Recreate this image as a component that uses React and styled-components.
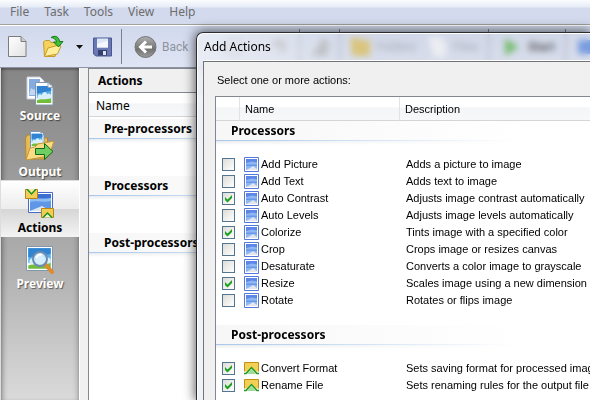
import React, { useState } from "react";
import styled, { createGlobalStyle, css } from "styled-components";

const UI_FONT = `"Noto Sans", "Open Sans", sans-serif`;
const LIST_FONT = `"Liberation Sans", Arial, sans-serif`;

const COLORS = {
  bar: "#d3daed",
  face: "#f0f0f0",
  edge: "#828790",
  groupLine: "#a9c8ea",
};

const GlobalStyle = createGlobalStyle`
  * {
    box-sizing: border-box;
  }
  html, body, #root {
    height: 100%;
    margin: 0;
  }
  body {
    overflow: hidden;
    font: 12px/16px ${UI_FONT};
    color: #000;
  }
  button {
    font: inherit;
    color: inherit;
    background: none;
    border: 0;
    padding: 0;
  }
`;

const Window = styled.div`
  position: relative;
  display: flex;
  flex-direction: column;
  height: 100%;
  overflow: hidden;
  background: ${COLORS.face};
`;

const MenuBar = styled.nav`
  display: flex;
  flex: none;
  gap: 15px;
  height: 25px;
  padding: 0 10px;
  background: linear-gradient(#fbfcfe, #e6ecf6 7px, ${COLORS.bar} 8px);
  border-bottom: 1px solid #a0a0a0;
  color: #6d6d6d;
`;

const ToolBar = styled.div`
  display: flex;
  flex: none;
  align-items: center;
  height: 43px;
  padding: 0 8px;
  border-top: 1px solid #fff;
  border-bottom: 1px solid #8f94a3;
  background: linear-gradient(#d0d8ec, #dfe5f4);
  overflow: hidden;
`;

const ToolButton = styled.button`
  display: flex;
  flex: none;
  align-items: center;
  gap: 5px;
  height: 32px;
  margin-right: ${(props) => props.$after || 0}px;
  color: ${(props) => (props.$strong ? "#111" : "#8e929d")};
  font: ${(props) => (props.$strong ? 700 : 400)} 12px/16px Roboto, sans-serif;
`;

const Separator = styled.span`
  flex: none;
  width: 1px;
  height: 35px;
  background: #7b8090;
  margin-right: ${(props) => props.$after}px;
`;

const Main = styled.div`
  display: flex;
  flex: 1;
  min-height: 0;
`;

const SideBar = styled.aside`
  flex: none;
  width: 80px;
  padding-top: 1px;
  border-left: 1px solid #ddd;
  border-right: 1px solid #fff;
  background: linear-gradient(#868686, #919191 60px, #b0b0b0 200px, #dadada);
  box-shadow: inset 5px 0 5px -3px rgba(0, 0, 0, 0.3),
    inset -5px 0 5px -3px rgba(0, 0, 0, 0.2), inset 0 2px 2px rgba(0, 0, 0, 0.25);
`;

const SideItem = styled.button`
  display: flex;
  flex-direction: column;
  align-items: center;
  justify-content: flex-end;
  width: 100%;
  height: 56px;
  padding-bottom: 1px;
  gap: 2px;
  color: #fff;
  font: 700 12px/16px ${UI_FONT};
  text-shadow: 1px 1px 1px rgba(0, 0, 0, 0.5);
  ${(props) =>
    props.$active &&
    css`
      color: #000;
      text-shadow: none;
      background: linear-gradient(#fff, #ececec 50%, #d6d6d6 51%, #f4f4f4);
      box-shadow: 0 -1px #ddd;
    `}
`;

const Panel = styled.section`
  flex: 1;
  margin-left: 8px;
  border-left: 1px solid ${COLORS.edge};
  border-top: 1px solid ${COLORS.edge};
  background: #fff;
`;

const PanelTitle = styled.h2`
  margin: 0;
  height: 24px;
  padding: 0 9px;
  background: ${COLORS.face};
  border-bottom: 1px solid ${COLORS.edge};
  font: 700 12px/23px ${UI_FONT};
`;

const PanelColumn = styled.div`
  height: 24px;
  padding: 0 7px;
  border-bottom: 1px solid #d5d5d5;
  background: linear-gradient(#fff 45%, #f4f5f7 46%, #f7f8f9);
  line-height: 25px;
`;

const GroupTitle = styled.h3`
  margin: 0;
  height: 24px;
  padding-left: 15px;
  font: 700 12px/19px ${UI_FONT};
  background: linear-gradient(90deg, #f7f7f7, #fff) 0 0 / 300px 19px no-repeat,
    linear-gradient(90deg, ${COLORS.groupLine}, #fff) 0 19px / 300px 1px no-repeat,
    linear-gradient(90deg, transparent, #fff 300px) 0 20px / 100% 4px no-repeat,
    linear-gradient(#e9ebee, #fff) 0 20px / 300px 4px no-repeat;
  white-space: nowrap;
`;

const PanelGroup = styled.div`
  height: 57px;
  padding-top: 2px;
`;

const Dialog = styled.section`
  position: absolute;
  top: 32px;
  left: 196px;
  right: 0;
  bottom: 0;
  display: flex;
  flex-direction: column;
  border: solid #2b2c30;
  border-width: 1px 0 0 1px;
  border-top-left-radius: 7px;
  box-shadow: 0 0 12px 1px rgba(0, 0, 0, 0.65), inset 1px 1px #fff;
  padding-left: 6px;
  background: linear-gradient(90deg, rgba(236, 239, 245, 0.8), rgba(208, 212, 224, 0.4) 160px);
  backdrop-filter: blur(3px);
`;

const DialogTitle = styled.h1`
  flex: none;
  margin: 0;
  padding-left: 1px;
  height: 28px;
  border-bottom: 1px solid #fff;
  font: 400 12px/28px ${UI_FONT};
`;

const DialogBody = styled.div`
  flex: 1;
  min-height: 0;
  overflow: hidden;
  padding: 9px 0 0 11px;
  border: solid #6f7278;
  border-width: 1px 0 0 1px;
  background: ${COLORS.face};
  font: 11px/17px ${LIST_FONT};
`;

const Prompt = styled.p`
  margin: 0 0 7px 2px;
  line-height: 18px;
`;

const List = styled.div`
  height: 100%;
  border: solid ${COLORS.edge};
  border-width: 1px 0 0 1px;
  background: #fff;
`;

const Table = styled.table`
  width: 100%;
  table-layout: fixed;
  border-collapse: separate;
  border-spacing: 0;
  th,
  td {
    padding: 0;
    text-align: left;
    font-weight: 400;
    white-space: nowrap;
  }
`;

const Column = styled.col`
  width: ${(props) => props.$width}px;
`;

const ColumnHead = styled.th`
  && {
    height: 24px;
    padding: 2px 5px 0;
    border-right: 1px solid #e2e3e6;
    border-bottom: 1px solid #d5d5d5;
    background: linear-gradient(#fff 45%, #f4f5f7 46%, #f7f8f9);
  }
  &&:last-child {
    border-right: 0;
  }
`;

const GroupCell = styled.th`
  && {
    height: 35px;
    vertical-align: top;
  }
`;

const SpacerCell = styled.td`
  height: 16px;
`;

const CheckCell = styled.td`
  && {
    height: 17px;
    padding-left: 6px;
  }
`;

const CheckBox = styled.input`
  appearance: none;
  display: block;
  width: 13px;
  height: 13px;
  margin: 0;
  border: 1px solid #54758f;
  background: linear-gradient(135deg, #dcdcd7, #fff);
  &:checked {
    background: url("data:image/svg+xml,%3Csvg xmlns='http://www.w3.org/2000/svg' viewBox='0 0 11 11'%3E%3Cpath d='M2 4v3l2.500 2.500L9 5V2L4.500 6.500z' fill='%2321a121'/%3E%3C/svg%3E"),
      linear-gradient(135deg, #dcdcd7, #fff);
  }
`;

const ItemLabel = styled.label`
  display: flex;
  align-items: center;
  gap: 2px;
  height: 17px;
  padding-left: 4px;
`;

const DescriptionCell = styled.td`
  && {
    padding-left: 6px;
  }
`;

function NewIcon() {
  return (
    <svg width="19" height="23" viewBox="0 0 19 23">
      <defs>
        <linearGradient id="sheet" x2="1" y2="1">
          <stop stopColor="#fff" />
          <stop offset="1" stopColor="#e2e2e2" />
        </linearGradient>
      </defs>
      <path d="M.5 1.500H13l5 5v15H.5z" fill="url(#sheet)" stroke="#7d7d7d" />
      <path d="M13 1.500v5h5" fill="#ccc" stroke="#7d7d7d" />
    </svg>
  );
}

function OpenIcon() {
  return (
    <svg width="21" height="23" viewBox="0 0 21 23">
      <path d="M.5 7l2-1.500h4l1.500 2h7v4l-3 10H1.500z" fill="#f3d35c" stroke="#c49a2c" />
      <path d="M1.500 21.500L5 13l11-3 2 1-3.500 8z" fill="#ffef9a" stroke="#c99c2c" />
      <path
        d="M8 2.500c4-2.500 8-1 8.500 4h3.500l-4.500 5.500-5-5h3C13 4.500 11 2.500 8 2.500z"
        fill="#3fbf35"
        stroke="#197a19"
      />
    </svg>
  );
}

function SaveIcon() {
  return (
    <svg width="19" height="20" viewBox="0 0 19 20">
      <path d="M.5 1h18v18H3l-2.500-2z" fill="#6a79b4" stroke="#4b5890" />
      <path d="M4 1.500h11v9H4z" fill="#dfe6f6" />
      <path d="M4 7l11-3v6.500H4z" fill="#f5f8fe" />
      <path d="M5 13h9v5.500H5z" fill="#37416f" />
      <path d="M10 14h3v4h-3z" fill="#dfe5f5" />
    </svg>
  );
}

function RoundArrow({ flip }) {
  return (
    <svg width="23" height="24" viewBox="0 0 23 24">
      <defs>
        <linearGradient id="ball" y2="1" x2="0">
          <stop stopColor="#b0b0b0" />
          <stop offset=".6" stopColor="#727272" />
          <stop offset="1" stopColor="#9c9c9c" />
        </linearGradient>
      </defs>
      <g
        transform={flip ? "matrix(-1 0 0 1 23 0)" : undefined}
        opacity={flip ? 0.35 : 1}
      >
        <circle cx="11.500" cy="12" r="10.500" fill="url(#ball)" stroke="#757575" />
        <path d="M18 12H7M12 6.500L6.500 12l5.500 5.500" fill="none" stroke="#fff" strokeWidth="3" />
      </g>
    </svg>
  );
}

function ToolGlyph({ fill, d }) {
  return (
    <svg width="22" height="22" viewBox="0 0 22 22">
      <path d={d} fill={fill} />
    </svg>
  );
}

function Photo({ x, y, w, h }) {
  return (
    <svg x={x} y={y} width={w} height={h} viewBox="0 0 20 20" preserveAspectRatio="none">
      <path d="M0 0h20v20H0z" fill="#fff" />
      <path d="M1 1h18v13H1z" fill="#59aee8" />
      <path d="M1 1h18v5l-18 3z" fill="#2f83d0" />
      <path d="M2 12c1-3 4-3 5-1 1-4 6-5 7-1 2-2 4-1 5 1v4H2z" fill="#d9f0fb" />
      <path d="M1 16c5-2 12 0 18-2v5H1z" fill="#73bd3c" />
    </svg>
  );
}

function SourceIcon() {
  return (
    <svg width="28" height="30" viewBox="0 0 28 30">
      <path d="M1 1h13l4 4v18H1z" fill="#fff" stroke="#c5cfdf" />
      <path d="M3 3h11v17H3z" fill="#84acdf" />
      <path d="M3 19l2-7 3 2 3-4 3 9z" fill="#c3d7f0" />
      <path d="M9.500 6.500H22l5 5v17.500H9.500z" fill="#fff" stroke="#8096ac" />
      <Photo x="10" y="9" w="16" h="19" />
      <path d="M22 6.500v5h5z" fill="#fff" stroke="#8fa4b8" />
    </svg>
  );
}

function OutputIcon() {
  return (
    <svg width="32" height="32" viewBox="0 0 32 32">
      <path d="M1.500 8l2-3h5l2 3h13v6L22 29H2z" fill="#e8bb54" stroke="#b58a2b" />
      <path d="M6.500 1.500H16l4 4v17H6.500z" fill="#fff" stroke="#7994b8" />
      <Photo x="7" y="3" w="12" h="14" />
      <path d="M2 30L6 18l5-1 3-3 16-3-5 15z" fill="#fbdb83" stroke="#c5973a" />
      <path d="M11.500 18.500h9v-5l8.500 8-8.500 8v-5h-9z" fill="#6fce62" stroke="#14661b" />
    </svg>
  );
}

function Envelope({ x, y, down }) {
  return (
    <svg x={x} y={y} width="13" height="10" viewBox="0 0 13 10">
      <path d="M.5.5h12v9H.5z" fill="#f3ce56" stroke="#b78516" />
      <path
        d={down ? "M2 0l4.500 5L11 0" : "M2 9.500L6.500 5 11 9.500"}
        fill={down ? "#f9e9a3" : "#e9f7d9"}
        stroke="#189421"
        strokeWidth="1.500"
      />
    </svg>
  );
}

function ActionsIcon() {
  return (
    <svg width="30" height="30" viewBox="0 0 30 30">
      <path d="M3.500 4.500h24v20h-24z" fill="#fff" stroke="#4668c6" />
      <path d="M5 6h21v17H5z" fill="#5f97e6" />
      <path d="M5 6h21v4l-21 2z" fill="#3a6fd4" />
      <path d="M5 11c6-2 14 1 21-1v3c-7 2-15-1-21 1z" fill="#8fbdf3" />
      <path d="M5 23l12-5 9 5z" fill="#dbe6f2" />
      <Envelope x="0" y="1" down />
      <Envelope x="16" y="20" />
    </svg>
  );
}

function PreviewIcon() {
  return (
    <svg width="32" height="30" viewBox="0 0 32 30">
      <path d="M2.500 2.500h26v24h-26z" fill="#fff" stroke="#8397ab" />
      <Photo x="3" y="3" w="25" h="23" />
      <path d="M21 20l7 8" stroke="#df8a2d" strokeWidth="4" strokeLinecap="round" />
      <circle cx="16" cy="15" r="7" fill="#d3edfb" fillOpacity=".85" stroke="#6b8bb4" strokeWidth="2" />
      <path d="M12 14c1-3 4-4 6-3" stroke="#fff" strokeWidth="2" fill="none" />
    </svg>
  );
}

function ProcessorIcon() {
  return (
    <svg width="15" height="15" viewBox="0 0 15 15">
      <path d="M.5.5h14v14H.5z" fill="#fff" stroke="#5478dc" />
      <path d="M2 2h11v11H2z" fill="#8db6f2" />
      <path d="M2 2h11v3.500L8 4.500 2 6z" fill="#5d86e6" />
      <path d="M2 7.500h11v1.500H2z" fill="#6a96ea" />
      <path d="M2 13l5-2.500L9 9l4 3v1z" fill="#e3e5ea" />
    </svg>
  );
}

function PostIcon() {
  return (
    <svg width="15" height="13" viewBox="0 0 15 13">
      <path d="M.5 9.500V.5h14v9" fill="#f2cf55" stroke="#c38e12" />
      <path d="M0 10h3L7.500 5 12 10h3v3H0z" fill="#fff" />
      <path d="M3 12l4.500-5 4.500 5z" fill="#9fdc97" />
      <path d="M0 11.500h2L7.500 5.500l5.500 6h2" fill="none" stroke="#1c9a24" strokeWidth="1.500" />
    </svg>
  );
}

const SIDE_ITEMS = [
  { name: "Source", icon: <SourceIcon /> },
  { name: "Output", icon: <OutputIcon /> },
  { name: "Actions", icon: <ActionsIcon /> },
  { name: "Preview", icon: <PreviewIcon /> },
];

const GROUPS = [
  {
    title: "Processors",
    icon: <ProcessorIcon />,
    items: [
      ["Add Picture", "Adds a picture to image"],
      ["Add Text", "Adds text to image"],
      ["Auto Contrast", "Adjusts image contrast automatically"],
      ["Auto Levels", "Adjusts image levels automatically"],
      ["Colorize", "Tints image with a specified color"],
      ["Crop", "Crops image or resizes canvas"],
      ["Desaturate", "Converts a color image to grayscale"],
      ["Resize", "Scales image using a new dimension"],
      ["Rotate", "Rotates or flips image"],
    ],
  },
  {
    title: "Post-processors",
    icon: <PostIcon />,
    items: [
      ["Convert Format", "Sets saving format for processed imag"],
      ["Rename File", "Sets renaming rules for the output file"],
    ],
  },
];

export default function App() {
  const [active, setActive] = useState("Actions");
  const [checked, setChecked] = useState([
    "Auto Contrast",
    "Colorize",
    "Resize",
    "Convert Format",
    "Rename File",
  ]);

  const toggle = (name) =>
    setChecked((list) =>
      list.includes(name) ? list.filter((n) => n !== name) : [...list, name]
    );

  return (
    <Window>
      <GlobalStyle />
      <MenuBar>
        {["File", "Task", "Tools", "View", "Help"].map((name) => (
          <button key={name}>{name}</button>
        ))}
      </MenuBar>
      <ToolBar>
        <ToolButton aria-label="New" $after={16}>
          <NewIcon />
        </ToolButton>
        <ToolButton aria-label="Open" $after={12}>
          <OpenIcon />
        </ToolButton>
        <ToolButton aria-label="Recent" $after={10}>
          <svg width="7" height="4" viewBox="0 0 7 4">
            <path d="M0 0h7L3.500 4z" fill="#111" />
          </svg>
        </ToolButton>
        <ToolButton aria-label="Save" $after={9}>
          <SaveIcon />
        </ToolButton>
        <Separator $after={12} />
        <ToolButton $after={34}>
          <RoundArrow />
          Back
        </ToolButton>
        <ToolButton aria-label="Next" $after={24}>
          <RoundArrow flip />
        </ToolButton>
        <ToolButton aria-label="Undo" $after={8}>
          <ToolGlyph fill="#a8a8a8" d="M4 6c8-6 16 0 12 8l-5 6 1-9-8 0z" />
        </ToolButton>
        <Separator $after={9} />
        <ToolButton aria-label="Edit" $after={8}>
          <ToolGlyph fill="#a8a8a8" d="M2 20L14 2l6 4-2 14z" />
        </ToolButton>
        <Separator $after={9} />
        <ToolButton $after={10}>
          <ToolGlyph fill="#e0bb3c" d="M1 2h9l2 2h9v16H3z" />
          Folders
        </ToolButton>
        <ToolButton $after={10}>
          <ToolGlyph fill="#fff" d="M2 1h12l6 6v14H8z" />
          Files
        </ToolButton>
        <Separator $after={12} />
        <ToolButton $strong $after={10}>
          <ToolGlyph fill="#3fae2c" d="M4 2l14 9-14 9z" />
          Start
        </ToolButton>
        <Separator $after={10} />
        <ToolButton aria-label="Options">
          <ToolGlyph fill="#3f78e0" d="M2 4h17v14H2z" />
        </ToolButton>
      </ToolBar>
      <Main>
        <SideBar>
          {SIDE_ITEMS.map((item) => (
            <SideItem
              key={item.name}
              $active={item.name === active}
              onClick={() => setActive(item.name)}
            >
              {item.icon}
              {item.name}
            </SideItem>
          ))}
        </SideBar>
        <Panel>
          <PanelTitle>Actions</PanelTitle>
          <PanelColumn>Name</PanelColumn>
          {["Pre-processors", "Processors", "Post-processors"].map((name) => (
            <PanelGroup key={name}>
              <GroupTitle>{name}</GroupTitle>
            </PanelGroup>
          ))}
        </Panel>
      </Main>
      <Dialog role="dialog" aria-labelledby="dialog-title">
        <DialogTitle id="dialog-title">Add Actions</DialogTitle>
        <DialogBody>
          <Prompt>Select one or more actions:</Prompt>
          <List>
            <Table>
              <colgroup>
                <Column $width={24} />
                <Column $width={160} />
                <col />
              </colgroup>
              <thead>
                <tr>
                  <ColumnHead aria-label="Selected" />
                  <ColumnHead>Name</ColumnHead>
                  <ColumnHead>Description</ColumnHead>
                </tr>
              </thead>
              {GROUPS.map((group) => (
                <tbody key={group.title}>
                  <tr>
                    <GroupCell colSpan={3}>
                      <GroupTitle>{group.title}</GroupTitle>
                    </GroupCell>
                  </tr>
                  {group.items.map(([name, description]) => (
                    <tr key={name}>
                      <CheckCell>
                        <CheckBox
                          type="checkbox"
                          id={name}
                          checked={checked.includes(name)}
                          onChange={() => toggle(name)}
                        />
                      </CheckCell>
                      <td>
                        <ItemLabel htmlFor={name}>
                          {group.icon}
                          {name}
                        </ItemLabel>
                      </td>
                      <DescriptionCell>{description}</DescriptionCell>
                    </tr>
                  ))}
                  <tr>
                    <SpacerCell colSpan={3} />
                  </tr>
                </tbody>
              ))}
            </Table>
          </List>
        </DialogBody>
      </Dialog>
    </Window>
  );
}
